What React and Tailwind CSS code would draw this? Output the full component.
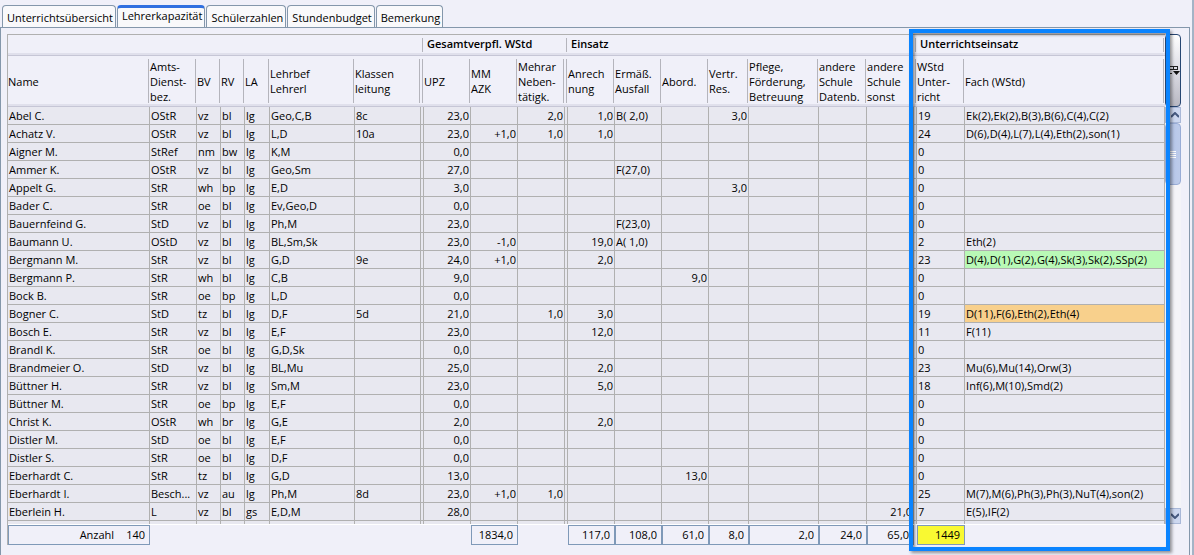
import React, { useState } from 'react';

const TABS = ['Unterrichtsübersicht', 'Lehrerkapazität', 'Schülerzahlen', 'Stundenbudget', 'Bemerkung'];

const GROUPS = [
    { label: '', span: 8 },
    { label: 'Gesamtverpfl. WStd', span: 4 },
    { label: 'Einsatz', span: 8 },
    { label: 'Unterrichtseinsatz', span: 2 },
];

// gap = schmale Trennspalte zwischen den Gruppen
const COLUMNS = [
    { key: 'name', lines: ['Name'], width: 'w-[142px]' },
    { key: 'amt', lines: ['Amts-', 'Dienst-', 'bez.'], width: 'w-[47px]' },
    { key: 'bv', lines: ['BV'], width: 'w-[24px]' },
    { key: 'rv', lines: ['RV'], width: 'w-[24px]' },
    { key: 'la', lines: ['LA'], width: 'w-[25px]' },
    { key: 'bef', lines: ['Lehrbef', 'Lehrerl'], width: 'w-[85px]' },
    { key: 'klasse', lines: ['Klassen', 'leitung'], width: 'w-[66px]' },
    { key: 'gap1', gap: true, width: 'w-[3px]' },
    { key: 'upz', lines: ['UPZ'], width: 'w-[47px]', right: true },
    { key: 'mm', lines: ['MM', 'AZK'], width: 'w-[47px]', right: true, total: '1834,0' },
    { key: 'mehr', lines: ['Mehrar', 'Neben-', 'tätigk.'], width: 'w-[47px]', right: true },
    { key: 'gap2', gap: true, width: 'w-[3px]' },
    { key: 'anrech', lines: ['Anrech', 'nung'], width: 'w-[47px]', right: true, total: '117,0' },
    { key: 'erm', lines: ['Ermäß.', 'Ausfall'], width: 'w-[47px]', total: '108,0' },
    { key: 'abord', lines: ['Abord.'], width: 'w-[47px]', right: true, total: '61,0' },
    { key: 'vertr', lines: ['Vertr.', 'Res.'], width: 'w-[40px]', right: true, total: '8,0' },
    { key: 'pflege', lines: ['Pflege,', 'Förderung,', 'Betreuung'], width: 'w-[70px]', right: true, total: '2,0' },
    { key: 'datenb', lines: ['andere', 'Schule', 'Datenb.'], width: 'w-[48px]', right: true, total: '24,0' },
    { key: 'sonst', lines: ['andere', 'Schule', 'sonst'], width: 'w-[47px]', right: true, total: '65,0' },
    { key: 'gap3', gap: true, width: 'w-[3px]' },
    { key: 'wstd', lines: ['WStd', 'Unter-', 'richt'], width: 'w-[48px]', total: '1449', highlight: true },
    { key: 'fach', lines: ['Fach (WStd)'], width: 'w-auto' },
];

const LEHRER = [
    { name: 'Abel C.', amt: 'OStR', bv: 'vz', rv: 'bl', la: 'lg', bef: 'Geo,C,B', klasse: '8c', upz: '23,0', mehr: '2,0', anrech: '1,0', erm: 'B( 2,0)', vertr: '3,0', wstd: '19', fach: 'Ek(2),Ek(2),B(3),B(6),C(4),C(2)' },
    { name: 'Achatz V.', amt: 'OStR', bv: 'vz', rv: 'bl', la: 'lg', bef: 'L,D', klasse: '10a', upz: '23,0', mm: '+1,0', mehr: '1,0', anrech: '1,0', wstd: '24', fach: 'D(6),D(4),L(7),L(4),Eth(2),son(1)' },
    { name: 'Aigner M.', amt: 'StRef', bv: 'nm', rv: 'bw', la: 'lg', bef: 'K,M', upz: '0,0', wstd: '0' },
    { name: 'Ammer K.', amt: 'OStR', bv: 'vz', rv: 'bl', la: 'lg', bef: 'Geo,Sm', upz: '27,0', erm: 'F(27,0)', wstd: '0' },
    { name: 'Appelt G.', amt: 'StR', bv: 'wh', rv: 'bp', la: 'lg', bef: 'E,D', upz: '3,0', vertr: '3,0', wstd: '0' },
    { name: 'Bader C.', amt: 'StR', bv: 'oe', rv: 'bl', la: 'lg', bef: 'Ev,Geo,D', upz: '0,0', wstd: '0' },
    { name: 'Bauernfeind G.', amt: 'StD', bv: 'vz', rv: 'bl', la: 'lg', bef: 'Ph,M', upz: '23,0', erm: 'F(23,0)', wstd: '0' },
    { name: 'Baumann U.', amt: 'OStD', bv: 'vz', rv: 'bl', la: 'lg', bef: 'BL,Sm,Sk', upz: '23,0', mm: '-1,0', anrech: '19,0', erm: 'A( 1,0)', wstd: '2', fach: 'Eth(2)' },
    { name: 'Bergmann M.', amt: 'StR', bv: 'vz', rv: 'bl', la: 'lg', bef: 'G,D', klasse: '9e', upz: '24,0', mm: '+1,0', anrech: '2,0', wstd: '23', fach: 'D(4),D(1),G(2),G(4),Sk(3),Sk(2),SSp(2)', fachBg: 'bg-[#b9f9b6]' },
    { name: 'Bergmann P.', amt: 'StR', bv: 'wh', rv: 'bl', la: 'lg', bef: 'C,B', upz: '9,0', abord: '9,0', wstd: '0' },
    { name: 'Bock B.', amt: 'StR', bv: 'oe', rv: 'bp', la: 'lg', bef: 'L,D', upz: '0,0', wstd: '0' },
    { name: 'Bogner C.', amt: 'StD', bv: 'tz', rv: 'bl', la: 'lg', bef: 'D,F', klasse: '5d', upz: '21,0', mehr: '1,0', anrech: '3,0', wstd: '19', fach: 'D(11),F(6),Eth(2),Eth(4)', fachBg: 'bg-[#f8d08c]' },
    { name: 'Bosch E.', amt: 'StR', bv: 'vz', rv: 'bl', la: 'lg', bef: 'E,F', upz: '23,0', anrech: '12,0', wstd: '11', fach: 'F(11)' },
    { name: 'Brandl K.', amt: 'StR', bv: 'oe', rv: 'bl', la: 'lg', bef: 'G,D,Sk', upz: '0,0', wstd: '0' },
    { name: 'Brandmeier O.', amt: 'StD', bv: 'vz', rv: 'bl', la: 'lg', bef: 'BL,Mu', upz: '25,0', anrech: '2,0', wstd: '23', fach: 'Mu(6),Mu(14),Orw(3)' },
    { name: 'Büttner H.', amt: 'StR', bv: 'vz', rv: 'bl', la: 'lg', bef: 'Sm,M', upz: '23,0', anrech: '5,0', wstd: '18', fach: 'Inf(6),M(10),Smd(2)' },
    { name: 'Büttner M.', amt: 'StR', bv: 'oe', rv: 'bp', la: 'lg', bef: 'E,F', upz: '0,0', wstd: '0' },
    { name: 'Christ K.', amt: 'OStR', bv: 'wh', rv: 'br', la: 'lg', bef: 'G,E', upz: '2,0', anrech: '2,0', wstd: '0' },
    { name: 'Distler M.', amt: 'StD', bv: 'oe', rv: 'bl', la: 'lg', bef: 'E,F', upz: '0,0', wstd: '0' },
    { name: 'Distler S.', amt: 'StR', bv: 'oe', rv: 'bl', la: 'lg', bef: 'D,F', upz: '0,0', wstd: '0' },
    { name: 'Eberhardt C.', amt: 'StR', bv: 'tz', rv: 'bl', la: 'lg', bef: 'G,D', upz: '13,0', abord: '13,0', wstd: '0' },
    { name: 'Eberhardt I.', amt: 'Besch...', bv: 'vz', rv: 'au', la: 'lg', bef: 'Ph,M', klasse: '8d', upz: '23,0', mm: '+1,0', mehr: '1,0', wstd: '25', fach: 'M(7),M(6),Ph(3),Ph(3),NuT(4),son(2)' },
    { name: 'Eberlein H.', amt: 'L', bv: 'vz', rv: 'bl', la: 'gs', bef: 'E,D,M', upz: '28,0', sonst: '21,0', wstd: '7', fach: 'E(5),IF(2)' },
];

const Reiter = ({ active, onSelect }) => (
    <div role="tablist" className="flex items-end h-[27px] gap-px pl-0.5">
        {TABS.map((tab) => (
            <button
                key={tab}
                type="button"
                role="tab"
                aria-selected={tab === active}
                onClick={() => onSelect(tab)}
                className={`h-[22px] pl-1 pr-0.5 rounded-t-sm border border-b-0 border-[#8497ab] bg-[#f9f9fb] whitespace-nowrap ${tab === active ? 'border-t-3 border-t-[#2f6fe0] pb-1' : 'pt-0.5'}`}
            >
                {tab}
            </button>
        ))}
    </div>
);

const Tabelle = () => (
    <table className="w-full table-fixed border-separate border-spacing-0 border-l border-t border-[#b0b0b0]">
        <colgroup>
            {COLUMNS.map((col) => (
                <col key={col.key} className={col.width} />
            ))}
        </colgroup>
        <thead>
            <tr>
                {GROUPS.map((group, index) => (
                    <th key={index} colSpan={group.span} scope="colgroup" className="h-[21px] p-0 border-b border-[#c6c6d6] shadow-[inset_0_-2px_0_#e0e0ec] text-left font-semibold">
                        <div className="h-3.5 leading-3 mr-px pl-[3px] border-r border-[#b4b4bc] whitespace-nowrap">{group.label}</div>
                    </th>
                ))}
            </tr>
            <tr>
                {COLUMNS.map((col) => (
                    <th key={col.key} scope="col" className="h-[51px] p-0 border-b border-[#c6c6d6] shadow-[inset_0_-2px_0_#e0e0ec] text-left font-normal">
                        <div className="flex items-center h-11 mr-px border-r border-[#b4b4bc] whitespace-nowrap">
                            <span className="leading-[15px]">
                                {(col.lines || []).map((line) => (
                                    <span key={line} className="block">{line}</span>
                                ))}
                            </span>
                        </div>
                    </th>
                ))}
            </tr>
        </thead>
        <tbody className="bg-[#e8e8f0]">
            {LEHRER.map((row) => (
                <tr key={row.name}>
                    {COLUMNS.map((col) => (
                        <td
                            key={col.key}
                            className={`h-[18px] p-0 leading-[17px] border-r border-b border-[#b0b0b0] whitespace-nowrap overflow-hidden ${col.gap ? '' : 'px-px'} ${col.right ? 'text-right' : ''} ${col.key === 'fach' && row.fachBg ? row.fachBg : ''}`}
                        >
                            {row[col.key]}
                        </td>
                    ))}
                </tr>
            ))}
            {/* angeschnittene nächste Zeile */}
            <tr>
                {COLUMNS.map((col) => (
                    <td key={col.key} className="h-[3px] p-0 border-r border-[#b0b0b0]"></td>
                ))}
            </tr>
        </tbody>
        <tfoot>
            <tr>
                {COLUMNS.map((col) => (
                    <td key={col.key} className="p-0 border-t border-white">
                        {col.key === 'name' && (
                            <div className="flex justify-end gap-3 h-5 pr-1 leading-[18px] border border-[#7f99b8]">
                                <span>Anzahl</span>
                                <span>140</span>
                            </div>
                        )}
                        {col.total && (
                            <div className={`h-5 pr-1 leading-[18px] text-right border border-[#7f99b8] ${col.highlight ? 'bg-[#f9f932]' : ''}`}>{col.total}</div>
                        )}
                    </td>
                ))}
            </tr>
        </tfoot>
    </table>
);

const Bildlauf = () => (
    <div className="flex flex-col w-4 h-[490px] shrink-0">
        <button type="button" aria-label="Spalten auswählen" className="flex items-center justify-end h-[73px] rounded-sm border border-[#274672] bg-linear-to-b from-white via-[#dcdce4] to-[#b8b8c2]">
            <svg width="11" height="11" viewBox="0 0 11 11" fill="none" stroke="#222" aria-hidden="true">
                <path d="M0 1.5h9M0 4.5h9M4.5 1v4M8.5 1v4M0 8.5h3" />
                <path d="M4 6h7l-3.500 4z" fill="#111" stroke="none" />
            </svg>
        </button>
        <button type="button" aria-label="Nach oben" className="flex items-center justify-center h-4 pl-1 border border-[#a9b8d8] bg-[#cdd8f0]">
            <svg width="8" height="6" viewBox="0 0 8 6" fill="none" stroke="#465a80" strokeWidth="2" aria-hidden="true"><path d="M0 5l4-4 4 4" /></svg>
        </button>
        <div className="flex-1 bg-[#f4f4f8]">
            <div className="flex flex-col items-end justify-center gap-px h-[62px] pr-1 rounded-sm border border-[#98acd6] bg-linear-to-r from-[#b4c4e8] to-[#bccbea]">
                <span className="w-2 h-px bg-white"></span>
                <span className="w-2 h-px bg-white"></span>
                <span className="w-2 h-px bg-white"></span>
                <span className="w-2 h-px bg-white"></span>
            </div>
        </div>
        <button type="button" aria-label="Nach unten" className="flex items-center justify-center h-4 pl-1 border border-[#a9b8d8] bg-[#cdd8f0]">
            <svg width="8" height="6" viewBox="0 0 8 6" fill="none" stroke="#465a80" strokeWidth="2" aria-hidden="true"><path d="M0 1l4 4 4-4" /></svg>
        </button>
    </div>
);

const App = () => {
    const [active, setActive] = useState('Lehrerkapazität');

    return (
        <div className="flex flex-col min-h-screen border-r-2 border-[#a4b4c6] bg-[#f0f0f9] text-black text-[11px] leading-4 font-['Open_Sans','Noto_Sans',sans-serif]">
            <Reiter active={active} onSelect={setActive} />
            <main className="relative flex flex-1 items-start mr-0.5 pt-1.5 pl-1.5 pr-2 border-l border-t border-r border-[#8497ab]">
                <div className="flex-1 min-w-0">
                    <Tabelle />
                </div>
                <Bildlauf />
                {/* Hervorhebung Unterrichtseinsatz */}
                <div className="absolute left-[908px] right-[19px] top-px bottom-1 border-4 border-[#0a84ff] shadow-[2px_2px_3px_rgba(0,0,0,0.4),inset_2px_2px_3px_rgba(0,0,0,0.4)] pointer-events-none"></div>
            </main>
        </div>
    );
};

export default App;
